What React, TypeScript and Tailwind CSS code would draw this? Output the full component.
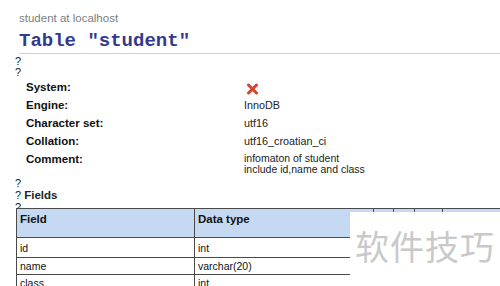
import React from "react";

const rows: { label: string; value: React.ReactNode }[] = [
  {
    label: "System:",
    value: (
      <svg width="13" height="12" viewBox="0 0 13 12" className="ml-[2px] mt-[3px]">
        <path d="M2.5 2 L10.5 10 M10.5 2 L2.5 10" stroke="#d8432c" strokeWidth="3" strokeLinecap="round" />
      </svg>
    ),
  },
  { label: "Engine:", value: "InnoDB" },
  { label: "Character set:", value: "utf16" },
  { label: "Collation:", value: "utf16_croatian_ci" },
];

const colWidths = ["w-[178px]", "w-[179px]", "w-[20px]", "w-[21px]", "w-[28px]", "w-[200px]"];

function Row({ cells, h, header }: { cells: string[]; h: string; header?: boolean }) {
  return (
    <div className={`flex ${h} border-b border-[#4a4a4a] ${header ? "bg-[#c6d9f2]" : "bg-white"}`}>
      {colWidths.map((w, i) => (
        <div
          key={i}
          className={`${w} shrink-0 border-l border-[#4a4a4a] ${
            header
              ? "pt-[3px] pl-[3px] font-bold text-[11.5px] leading-[14px]"
              : "flex items-center pl-[3px] text-[10.5px] leading-[12px]"
          } text-[#111]`}
        >
          {cells[i] ?? ""}
        </div>
      ))}
    </div>
  );
}

export default function App() {
  return (
    <div className="relative w-[500px] h-[286px] overflow-hidden bg-white text-black font-['Liberation_Sans',Arial,sans-serif]">
      <div className="pl-[19px] pt-[11px] h-[25px] text-[11.5px] leading-[14px] text-[#7d7d7d]">
        student at localhost
      </div>
      <div className="pl-[19px] mt-[5px] h-[23px] font-['Liberation_Mono','Courier_New',monospace] font-bold text-[19px] leading-[22px] text-[#333a8e]">
        Table "student"
      </div>
      <div className="ml-[19px] h-px bg-[#cfcfcf]" />
      <div className="pl-[15px] mt-[2px] text-[11px] leading-[11px] text-[#222]">
        <div>?</div>
        <div>?</div>
      </div>
      <div className="pl-[26px]">
        {rows.map((r) => (
          <div key={r.label} className="grid grid-cols-[218px_1fr] h-[18px] items-center">
            <div className="font-bold text-[11.5px] leading-[18px] text-[#111]">{r.label}</div>
            <div className="text-[10.8px] leading-[18px] text-[#222]">{r.value}</div>
          </div>
        ))}
        <div className="grid grid-cols-[218px_1fr]">
          <div className="font-bold text-[11.5px] leading-[18px] text-[#111]">Comment:</div>
          <div className="pt-[3px] text-[10.5px] leading-[11px] text-[#222]">
            <div>infomaton of student</div>
            <div>include id,name and class</div>
          </div>
        </div>
      </div>
      <div className="pl-[15px] mt-[2px] text-[11px] leading-[12px] text-[#222]">
        <div>?</div>
        <div>
          ? <span className="font-bold text-[11.5px]">Fields</span>
        </div>
        <div className="h-[7px] overflow-hidden">?</div>
      </div>
      <div className="ml-[16px] w-[700px] border-t border-[#4a4a4a]">
        <Row header h="h-[29px]" cells={["Field", "Data type"]} />
        <Row h="h-[20px]" cells={["id", "int"]} />
        <Row h="h-[17px]" cells={["name", "varchar(20)"]} />
        <Row h="h-[17px]" cells={["class", "int"]} />
      </div>
      <div className="absolute left-[350px] top-[212px] w-[150px] h-[74px] bg-white flex items-start pl-[5px] pt-[14px]">
        <span className="font-['Noto_Sans_CJK_SC',sans-serif] text-[34px] leading-[40px] tracking-[1px] text-[#c9c9c9]">
          软件技巧
        </span>
      </div>
    </div>
  );
}
